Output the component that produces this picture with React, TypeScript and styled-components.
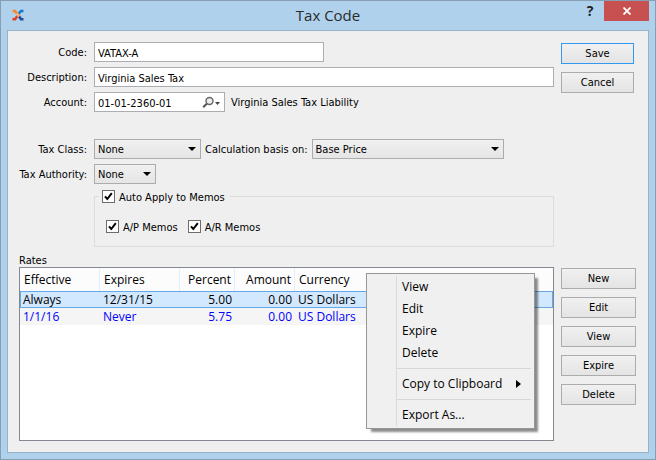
import React from "react";
import styled, { createGlobalStyle, css } from "styled-components";

const formFont = `"DejaVu Sans Condensed", "DejaVu Sans", sans-serif`;
const menuFont = `"Open Sans", "Noto Sans", sans-serif`;

const GlobalStyle = createGlobalStyle`
  *, *::before, *::after { box-sizing: border-box; }
  body {
    margin: 0;
    font-family: ${formFont};
    font-size: 11px;
    line-height: 14px;
    color: #000;
  }
  button, input, select { font: inherit; color: inherit; margin: 0; }
`;

const Window = styled.main`
  display: flex;
  flex-direction: column;
  min-height: 100vh;
  padding: 0 6px 6px;
  border: 1px solid #869fb5;
  background: #afd1ec;
`;

const TitleBar = styled.header`
  display: grid;
  grid-template-columns: 1fr auto 1fr;
  height: 29px;
`;

const AppIcon = styled.svg`
  margin: 7px 0 0 4px;
`;

const Title = styled.h1`
  margin: 0;
  font: 400 15px/29px ${menuFont};
  color: #2b2b2b;
`;

const Caption = styled.div`
  display: flex;
  justify-content: flex-end;
  align-items: flex-start;
`;

const HelpButton = styled.button`
  display: grid;
  place-items: center;
  width: 28px;
  height: 20px;
  padding: 0;
  border: 0;
  background: none;
  color: #1e2225;
  font: 700 14px/20px ${menuFont};
`;

const CloseButton = styled(HelpButton)`
  width: 45px;
  background: #c75050;
`;

const Client = styled.form`
  flex: 1;
  display: flex;
  flex-direction: column;
  padding: 11px 12px 11px 11px;
  border: 1px solid #95b2ca;
  background: #efefef;
`;

const Section = styled.section<{ $grow?: boolean }>`
  display: grid;
  grid-template-columns: minmax(0, 1fr) 75px;
  column-gap: 7px;
  ${(p) => p.$grow && css`flex: 1;`}
`;

const Fields = styled.div`
  display: flex;
  flex-direction: column;
  gap: 5px;
`;

const FieldRow = styled.div<{ $spaced?: boolean }>`
  display: grid;
  grid-template-columns: 68px minmax(0, 1fr);
  column-gap: 7px;
  align-items: center;
  ${(p) => p.$spaced && css`margin-top: 22px;`}
`;

const Label = styled.label`
  padding-top: 2px;
  text-align: right;
  white-space: nowrap;
`;

const AccountName = styled.span`
  padding: 2px 0 0 1px;
`;

const Controls = styled.div<{ $gap?: number }>`
  display: flex;
  align-items: center;
  gap: ${(p) => p.$gap ?? 5}px;
  white-space: nowrap;
`;

const TextInput = styled.input<{ $width?: number }>`
  width: ${(p) => (p.$width ? `${p.$width}px` : "100%")};
  height: 20px;
  padding: 2px 3px 0;
  border: 1px solid #abadb3;
  border-radius: 0;
  background: #fff;
  outline: none;
`;

const LookupBox = styled.div`
  display: flex;
  align-items: center;
  width: 131px;
  height: 20px;
  border: 1px solid #abadb3;
  background: #fff;
`;

const LookupInput = styled(TextInput)`
  flex: 1;
  min-width: 0;
  height: 18px;
  border: 0;
  background: none;
`;

const LookupButton = styled.button`
  display: flex;
  align-items: center;
  padding: 0 4px 0 0;
  border: 0;
  background: none;
`;

const SelectBox = styled.div<{ $width: number }>`
  display: grid;
  width: ${(p) => p.$width}px;
  align-items: center;
  & > * { grid-area: 1 / 1; }
`;

const Select = styled.select`
  appearance: none;
  width: 100%;
  height: 20px;
  padding: 1px 20px 0 3px;
  border: 1px solid #acacac;
  border-radius: 0;
  background: linear-gradient(#f0f0f0, #e5e5e5);
  outline: none;
`;

const SelectArrow = styled.svg`
  justify-self: end;
  margin-right: 5px;
  pointer-events: none;
`;

const Group = styled.fieldset`
  min-width: 0;
  height: 58px;
  margin: 0 0 0 75px;
  padding: 14px 12px 0 11px;
  border: 1px solid #dcdcdc;
`;

const GroupLegend = styled.legend`
  margin-left: -7px;
  padding: 0 4px 0 3px;
`;

const GroupItems = styled.div`
  display: flex;
  gap: 10px;
  padding-top: 1px;
`;

const CheckLabel = styled.label`
  display: flex;
  align-items: center;
  gap: 4px;
  height: 15px;
  white-space: nowrap;
`;

const CheckText = styled.span`
  padding-top: 2px;
`;

const CheckBox = styled.span`
  display: grid;
  width: 13px;
  height: 13px;
  & > * { grid-area: 1 / 1; }
  svg { pointer-events: none; visibility: hidden; }
  input:checked + svg { visibility: visible; }
`;

const CheckInput = styled.input`
  appearance: none;
  width: 13px;
  height: 13px;
  border: 1px solid #6c6c6c;
  background: #fff;
`;

const Actions = styled.div<{ $narrow?: boolean }>`
  display: flex;
  flex-direction: column;
  gap: 8px;
  padding: 1px ${(p) => (p.$narrow ? 2 : 0)}px 0 0;
`;

const PushButton = styled.button<{ $default?: boolean }>`
  height: 21px;
  padding: 1px 0 0;
  border: 1px solid ${(p) => (p.$default ? "#3399f0" : "#acacac")};
  border-radius: 0;
  background: linear-gradient(#f0f0f0, #e4e4e4);
`;

const RatesTitle = styled.h2`
  margin: 7px 0 0;
  height: 13px;
  font: inherit;
  line-height: 13px;
`;

const RatesPanel = styled.div`
  position: relative;
  border: 1px solid #828790;
  background: #fff;
`;

const RatesTable = styled.table`
  width: 100%;
  table-layout: fixed;
  border-spacing: 0;
  font: 12px/15px ${menuFont};
`;

const HeadCell = styled.th<{ $width?: number; $right?: boolean }>`
  width: ${(p) => (p.$width ? `${p.$width}px` : "auto")};
  height: 23px;
  padding: 0 3px 0 4px;
  border-right: 1px solid #e5edf8;
  background: #fcfcfc;
  font-weight: 400;
  text-align: ${(p) => (p.$right ? "right" : "left")};
  &:last-child { border-right: 0; }
`;

const Cell = styled.td<{ $right?: boolean }>`
  height: 17px;
  padding: 0 3px;
  text-align: ${(p) => (p.$right ? "right" : "left")};
`;

const RateRow = styled.tr<{ $selected?: boolean }>`
  color: ${(p) => (p.$selected ? "#000" : "#0000ff")};
  background: ${(p) => (p.$selected ? "#d1e8ff" : "#f5f5f5")};
  ${(p) =>
    p.$selected &&
    css`
      ${Cell} {
        border: 0 solid #66a7e8;
        border-width: 1px 0;
      }
      ${Cell}:first-child { border-left-width: 1px; padding-left: 2px; }
      ${Cell}:last-child { border-right-width: 1px; }
    `}
`;

const ContextMenu = styled.div`
  position: absolute;
  top: 5px;
  left: 346px;
  width: 169px;
  padding: 2px;
  border: 1px solid #979797;
  background-color: #f0f0f0;
  background-image: linear-gradient(90deg, transparent 27px, #d9d9d9 27px, #d9d9d9 28px, transparent 28px);
  background-origin: content-box;
  background-repeat: no-repeat;
  box-shadow: 4px 4px 2px -1px rgba(0, 0, 0, 0.45);
`;

const MenuItem = styled.button`
  display: flex;
  align-items: center;
  justify-content: space-between;
  width: 100%;
  height: 22px;
  padding: 0 11px 0 33px;
  border: 0;
  background: none;
  font: 12px/22px ${menuFont};
  white-space: nowrap;
`;

const MenuLine = styled.hr`
  height: 1px;
  margin: 4px 1px 4px 28px;
  border: 0;
  background: #d7d7d7;
`;

function Check({ label }: { label: string }) {
  return (
    <CheckLabel>
      <CheckBox>
        <CheckInput type="checkbox" defaultChecked />
        <svg width="13" height="13" viewBox="0 0 13 13" fill="none" stroke="#000" strokeWidth="2">
          <path d="M3 6.3 5.3 9 9.8 3.2" />
        </svg>
      </CheckBox>
      <CheckText>{label}</CheckText>
    </CheckLabel>
  );
}

function DropDown({ id, width, value }: { id: string; width: number; value: string }) {
  return (
    <SelectBox $width={width}>
      <Select id={id} defaultValue={value}>
        <option>{value}</option>
      </Select>
      <SelectArrow width="8" height="4" viewBox="0 0 8 4" aria-hidden="true">
        <path d="M0 0h8L4 4z" />
      </SelectArrow>
    </SelectBox>
  );
}

const rates = [
  { effective: "Always", expires: "12/31/15", percent: "5.00", amount: "0.00", currency: "US Dollars", selected: true },
  { effective: "1/1/16", expires: "Never", percent: "5.75", amount: "0.00", currency: "US Dollars", selected: false },
];

export default function App() {
  return (
    <>
      <GlobalStyle />
      <Window>
        <TitleBar>
          <AppIcon width="14" height="14" viewBox="0 0 14 14" fill="none" aria-hidden="true">
            <path d="M12.5 3H10L7.5 6" stroke="#1b78c8" strokeWidth="2.6" />
            <path d="M6.5 8 4 11.2H1.5" stroke="#e0401f" strokeWidth="2.6" />
            <path d="M1.5 3H4l4.500 5.600" stroke="#f08a32" strokeWidth="2.6" />
            <path d="M8 8.200 10 11.2h2.5" stroke="#234a9c" strokeWidth="2.6" />
            <path d="M5.5 5.5l2.500 3" stroke="#f7b48a" strokeWidth="2" />
          </AppIcon>
          <Title>Tax Code</Title>
          <Caption>
            <HelpButton type="button" aria-label="Help">?</HelpButton>
            <CloseButton type="button" aria-label="Close">
              <svg width="8" height="8" viewBox="0 0 8 8" stroke="#fff" strokeWidth="1.8">
                <path d="M.5.5l7 7M7.5.5l-7 7" />
              </svg>
            </CloseButton>
          </Caption>
        </TitleBar>

        <Client onSubmit={(e) => e.preventDefault()}>
          <Section>
            <Fields>
              <FieldRow>
                <Label htmlFor="code">Code:</Label>
                <TextInput id="code" $width={230} defaultValue="VATAX-A" />
              </FieldRow>
              <FieldRow>
                <Label htmlFor="description">Description:</Label>
                <TextInput id="description" defaultValue="Virginia Sales Tax" />
              </FieldRow>
              <FieldRow>
                <Label htmlFor="account">Account:</Label>
                <Controls>
                  <LookupBox>
                    <LookupInput id="account" defaultValue="01-01-2360-01" />
                    <LookupButton type="button" aria-label="Find account">
                      <svg width="18" height="13" viewBox="0 0 18 13" fill="none">
                        <path d="M1.2 11.3 5 7.5" stroke="#555" strokeWidth="2" />
                        <circle cx="7.5" cy="5" r="3.5" fill="#eee" stroke="#666" strokeWidth="1.4" />
                        <path d="M13 6h5l-2.5 3z" fill="#444" />
                      </svg>
                    </LookupButton>
                  </LookupBox>
                  <AccountName>Virginia Sales Tax Liability</AccountName>
                </Controls>
              </FieldRow>
              <FieldRow $spaced>
                <Label htmlFor="tax-class">Tax Class:</Label>
                <Controls $gap={4}>
                  <DropDown id="tax-class" width={107} value="None" />
                  <Label htmlFor="basis">Calculation basis on:</Label>
                  <DropDown id="basis" width={192} value="Base Price" />
                </Controls>
              </FieldRow>
              <FieldRow>
                <Label htmlFor="authority">Tax Authority:</Label>
                <DropDown id="authority" width={62} value="None" />
              </FieldRow>
              <Group>
                <GroupLegend>
                  <Check label="Auto Apply to Memos" />
                </GroupLegend>
                <GroupItems>
                  <Check label="A/P Memos" />
                  <Check label="A/R Memos" />
                </GroupItems>
              </Group>
            </Fields>
            <Actions $narrow>
              <PushButton type="submit" $default>Save</PushButton>
              <PushButton type="button">Cancel</PushButton>
            </Actions>
          </Section>

          <RatesTitle>Rates</RatesTitle>

          <Section $grow>
            <RatesPanel>
              <RatesTable>
                <thead>
                  <tr>
                    <HeadCell $width={80}>Effective</HeadCell>
                    <HeadCell $width={80}>Expires</HeadCell>
                    <HeadCell $width={55} $right>Percent</HeadCell>
                    <HeadCell $width={60} $right>Amount</HeadCell>
                    <HeadCell>Currency</HeadCell>
                  </tr>
                </thead>
                <tbody>
                  {rates.map((r) => (
                    <RateRow key={r.effective} $selected={r.selected}>
                      <Cell>{r.effective}</Cell>
                      <Cell>{r.expires}</Cell>
                      <Cell $right>{r.percent}</Cell>
                      <Cell $right>{r.amount}</Cell>
                      <Cell>{r.currency}</Cell>
                    </RateRow>
                  ))}
                </tbody>
              </RatesTable>
              <ContextMenu role="menu">
                <MenuItem type="button" role="menuitem">View</MenuItem>
                <MenuItem type="button" role="menuitem">Edit</MenuItem>
                <MenuItem type="button" role="menuitem">Expire</MenuItem>
                <MenuItem type="button" role="menuitem">Delete</MenuItem>
                <MenuLine />
                <MenuItem type="button" role="menuitem" aria-haspopup="menu">
                  Copy to Clipboard
                  <svg width="5" height="8" viewBox="0 0 5 8" aria-hidden="true">
                    <path d="M0 0v8l5-4z" />
                  </svg>
                </MenuItem>
                <MenuLine />
                <MenuItem type="button" role="menuitem">Export As...</MenuItem>
              </ContextMenu>
            </RatesPanel>
            <Actions>
              <PushButton type="button">New</PushButton>
              <PushButton type="button">Edit</PushButton>
              <PushButton type="button">View</PushButton>
              <PushButton type="button">Expire</PushButton>
              <PushButton type="button">Delete</PushButton>
            </Actions>
          </Section>
        </Client>
      </Window>
    </>
  );
}
